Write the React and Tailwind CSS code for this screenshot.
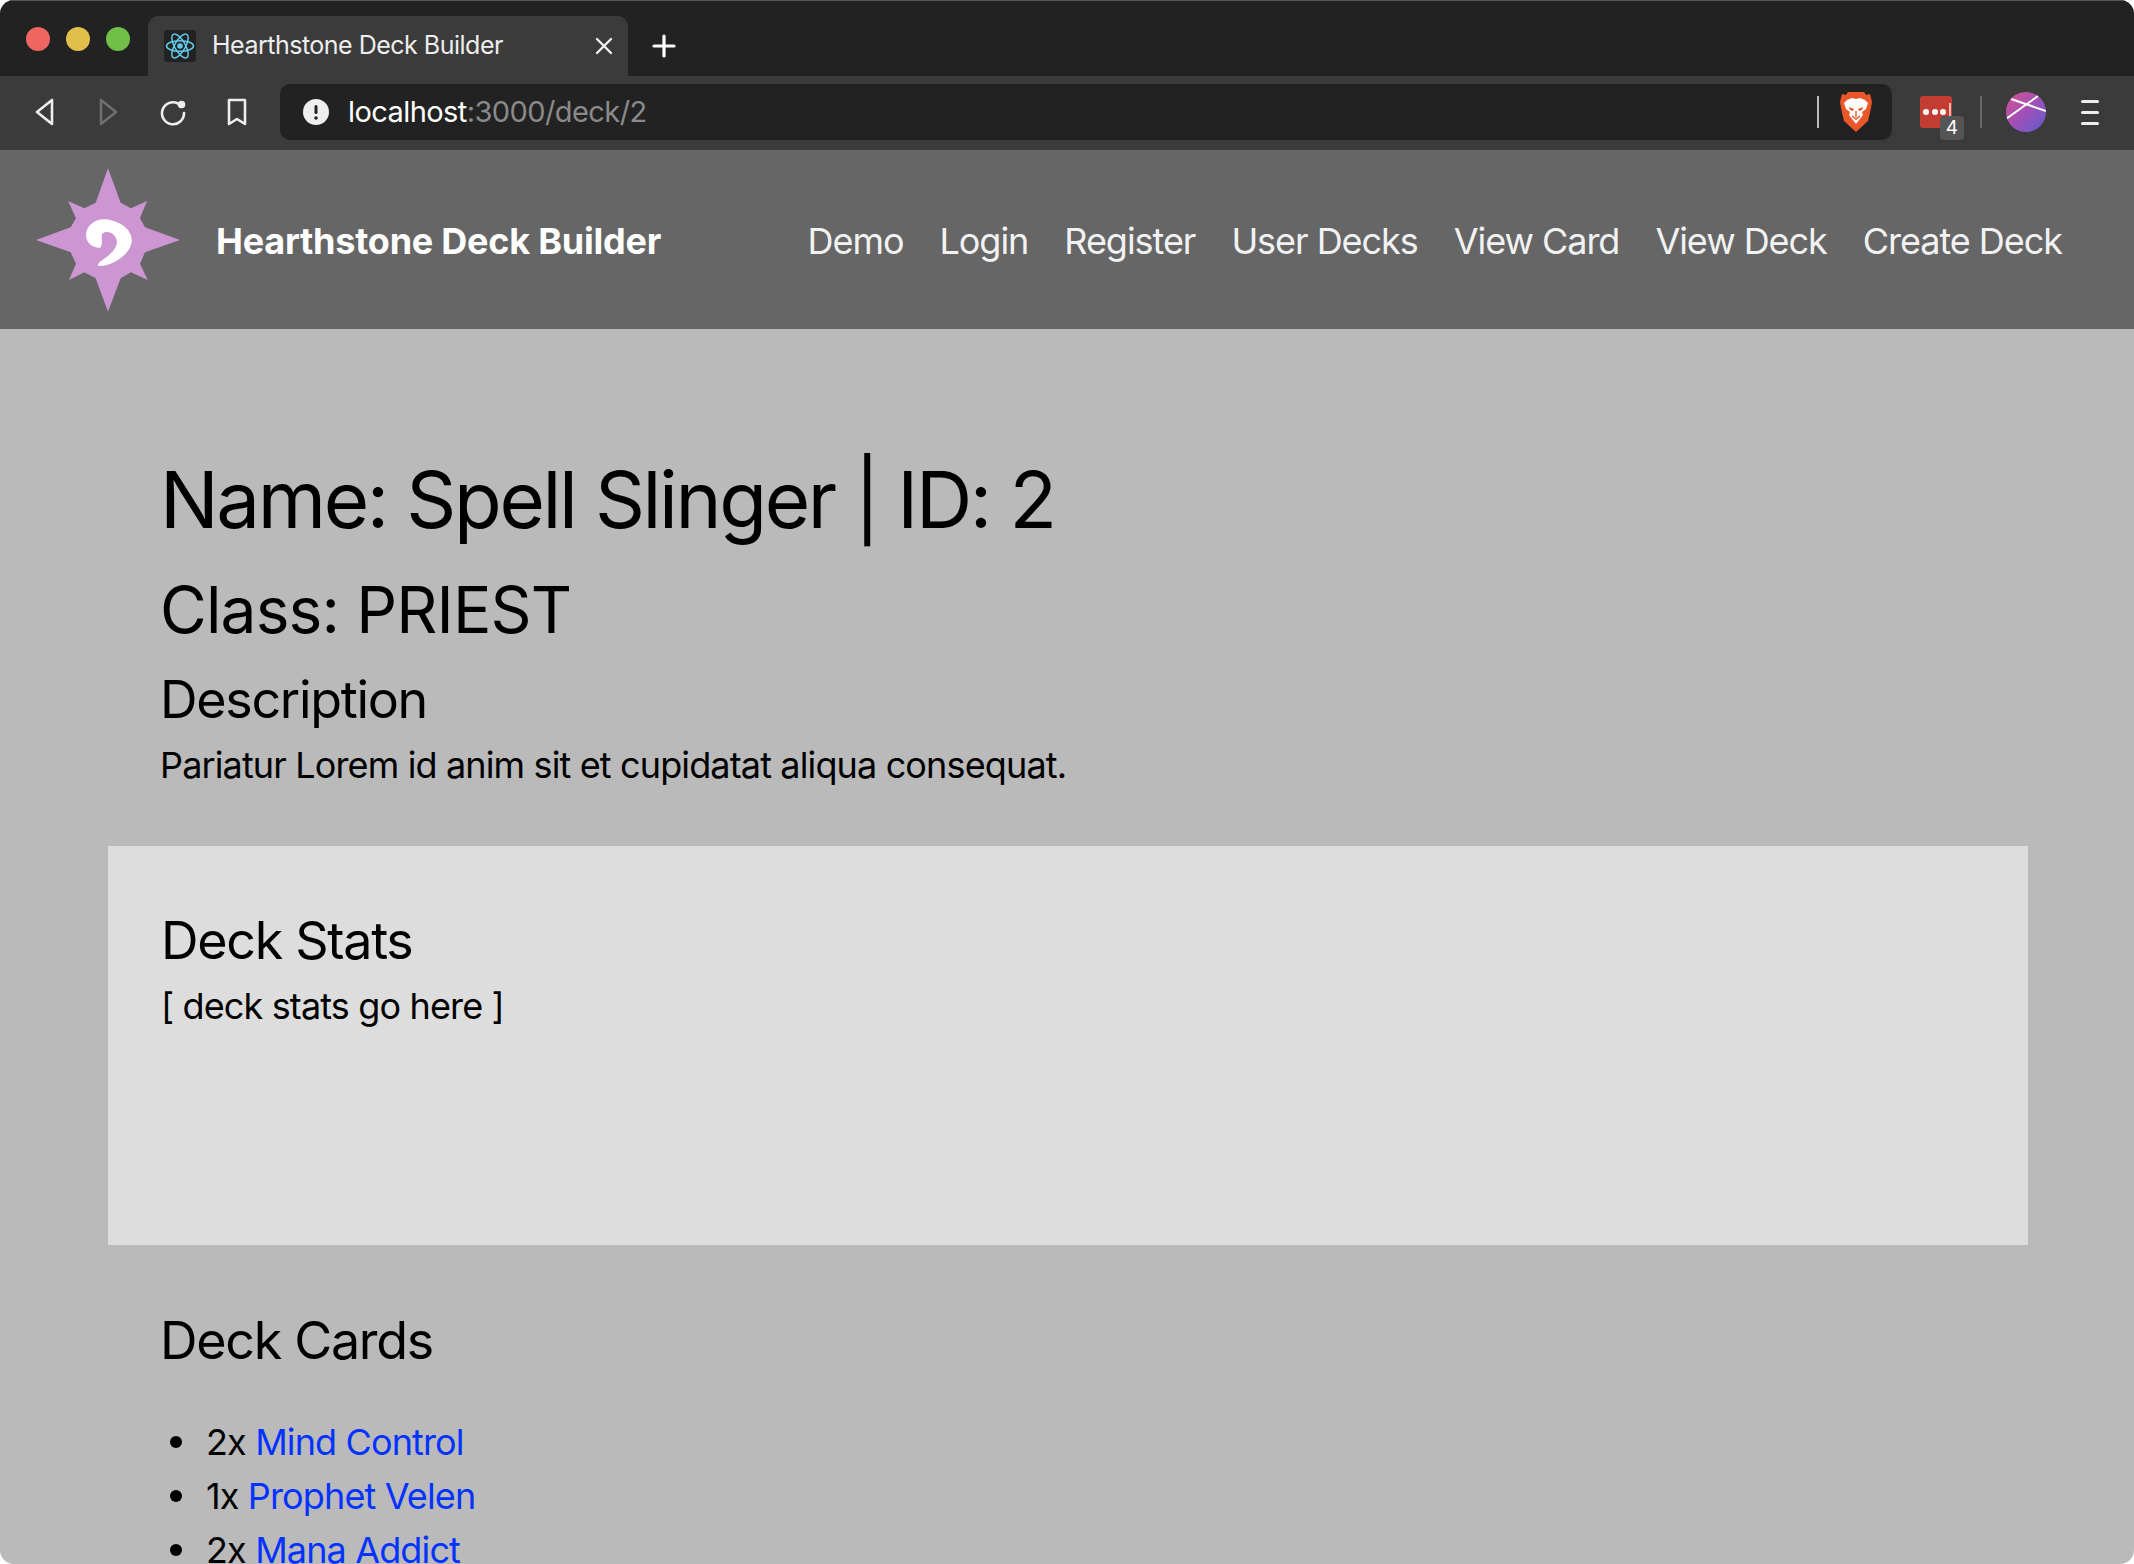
const FONT = "font-['Inter','Liberation_Sans',sans-serif]";

function Favicon() {
  return (
    <div className="w-8 h-8 rounded-[3px] bg-[#222222] flex items-center justify-center">
      <svg width="30" height="30" viewBox="-15 -15 30 30" fill="none" stroke="#61c8e8" strokeWidth="1.5">
        <circle r="2.8" fill="#61c8e8" stroke="none" />
        <ellipse rx="13.5" ry="5.3" />
        <ellipse rx="13.5" ry="5.3" transform="rotate(60)" />
        <ellipse rx="13.5" ry="5.3" transform="rotate(120)" />
      </svg>
    </div>
  );
}

function Lion() {
  return (
    <svg width="32" height="40" viewBox="0 0 32 40">
      <path d="M8 0h16l2 3 4-1 2 8-1 6-3 13-12 11L4 29 1 16 0 10l2-8 4 1z" fill="#e9562a" />
      <path d="M7 8l5-2 4 1 4-1 5 2 3 3-2 6-4 3 1 3-7 9-7-9 1-3-4-3-2-6z" fill="#ffffff" />
      <path d="M9 15l5 2-1 2-3-1zM23 15l-5 2 1 2 3-1z" fill="#e9562a" />
      <path d="M16 19v6M12 24l4 3 4-3" fill="none" stroke="#e9562a" strokeWidth="1.4" />
    </svg>
  );
}

function Logo() {
  return (
    <svg width="144" height="144" viewBox="48 55 432 430" className="shrink-0">
      <polygon fill="#cc96d2" points="264,55 302,158 333,175 381,153 360,205 375,232 480,270 375,307 360,341 383,390 333,367 302,385 264,485 227,385 193,367 147,390 168,341 152,307 48,270 152,232 168,205 144,153 193,175 227,158" />
      <path fill="#ffffff" d="M198 255C200 225 225 207 255 208C300 212 338 240 335 275C332 310 280 348 240 348C232 348 232 342 240 335C270 315 295 295 290 270C286 250 262 240 248 250C240 258 252 285 240 293C220 295 198 280 198 255Z" />
    </svg>
  );
}

const navLinks = ["Demo", "Login", "Register", "User Decks", "View Card", "View Deck", "Create Deck"];
const cards = [["2x", "Mind Control"], ["1x", "Prophet Velen"], ["2x", "Mana Addict"]];

export default function App() {
  return (
    <div className={`w-[2134px] h-[1564px] overflow-hidden bg-white ${FONT}`}>
      <div className="h-full overflow-hidden rounded-[14px] flex flex-col bg-[#bababa]">
        {/* tab strip */}
        <div className="h-[76px] shrink-0 bg-[#222222] border-t border-[#555555] flex items-end">
          <div className="w-[148px] h-[60px] flex items-center gap-4 pl-[26px] pb-[14px]">
            <span className="w-6 h-6 rounded-full bg-[#ef6560]" />
            <span className="w-6 h-6 rounded-full bg-[#e2bf4b]" />
            <span className="w-6 h-6 rounded-full bg-[#70bf47]" />
          </div>
          <div className="w-[480px] h-[60px] bg-[#3b3b3b] rounded-t-[10px] flex items-center pl-4 pr-[15px] gap-4">
            <Favicon />
            <span className="text-[25px] tracking-[-0.5px] text-[#eeeeee] flex-1">Hearthstone Deck Builder</span>
            <svg width="18" height="18" viewBox="0 0 18 18" stroke="#eeeeee" strokeWidth="2.4" strokeLinecap="round"><path d="M2 2l14 14M16 2L2 16" /></svg>
          </div>
          <div className="w-[72px] h-[60px] flex items-center justify-center">
            <svg width="24" height="24" viewBox="0 0 24 24" stroke="#ffffff" strokeWidth="3.2" strokeLinecap="round"><path d="M12 2v20M2 12h20" /></svg>
          </div>
        </div>
        {/* toolbar */}
        <div className="h-[74px] shrink-0 bg-[#3b3b3b] flex items-center pb-[2px]">
          <div className="w-[280px] flex items-center pl-[34px] gap-[41px] shrink-0">
            <svg width="22" height="28" viewBox="0 0 22 28" fill="none" stroke="#eeeeee" strokeWidth="2.6" strokeLinejoin="round"><path d="M18 2v24L3 14z" /></svg>
            <svg width="22" height="28" viewBox="0 0 22 28" fill="none" stroke="#6f6f6f" strokeWidth="2.6" strokeLinejoin="round"><path d="M4 2v24l15-12z" /></svg>
            <svg width="26" height="28" viewBox="0 0 26 28" fill="none" stroke="#eeeeee" strokeWidth="2.6" strokeLinecap="round"><path d="M18 5.5A11 11 0 1 0 24 15" /><circle cx="21.5" cy="6.5" r="3.8" fill="#eeeeee" stroke="none" /></svg>
            <svg width="20" height="28" viewBox="0 0 20 28" fill="none" stroke="#eeeeee" strokeWidth="2.6" strokeLinejoin="round"><path d="M2 2h16v24l-8-5-8 5z" /></svg>
          </div>
          <div className="w-[1612px] h-[56px] bg-[#222222] rounded-[10px] flex items-center pl-[23px] shrink-0">
            <svg width="26" height="26" viewBox="0 0 26 26" className="shrink-0">
              <circle cx="13" cy="13" r="13" fill="#eeeeee" />
              <rect x="11.5" y="6" width="3" height="9" rx="1.5" fill="#222222" />
              <circle cx="13" cy="19" r="1.8" fill="#222222" />
            </svg>
            <span className="ml-[19px] text-[29px] tracking-[-0.58px] text-white">localhost<span className="text-[#8a8a8a]">:3000/deck/2</span></span>
            <div className="ml-auto w-[2px] h-8 bg-[#bbbbbb]" />
            <div className="ml-[21px] mr-[20px]"><Lion /></div>
          </div>
          <div className="ml-[28px] relative w-8 h-8 rounded-[3px] bg-[#c43d33] flex items-center gap-[2.5px] pl-[3px]">
            <span className="w-[6px] h-[6px] rounded-full bg-white" />
            <span className="w-[6px] h-[6px] rounded-full bg-white" />
            <span className="w-[6px] h-[6px] rounded-full bg-white" />
            <span className="w-[2px] h-[16px] -mt-[2px] bg-[#f0b8b0]" />
            <div className="absolute left-5 top-5 w-6 h-6 rounded-[4px] bg-[#555555] text-white text-[19px] flex items-center justify-center">4</div>
          </div>
          <div className="ml-[28px] w-[2px] h-8 bg-[#666666]" />
          <div className="ml-[24px] w-10 h-10 rounded-full overflow-hidden bg-gradient-to-br from-[#d8508c] via-[#a04fb8] to-[#5a5ad0]">
            <svg width="40" height="40" viewBox="0 0 40 40" stroke="#ffffff" strokeWidth="2" fill="none"><path d="M5 7l35 12M0 27L32 4" /></svg>
          </div>
          <div className="ml-[35px] w-[18px] flex flex-col gap-[8px]">
            <span className="h-[3px] rounded bg-[#eeeeee]" />
            <span className="h-[3px] rounded bg-[#eeeeee]" />
            <span className="h-[3px] rounded bg-[#eeeeee]" />
          </div>
        </div>
        {/* navbar */}
        <nav className="h-[179px] shrink-0 bg-[#666666] flex items-center pl-9 pr-[72px] text-[36px]">
          <Logo />
          <a className="ml-9 mt-[2px] font-bold tracking-[-0.23px] text-white">Hearthstone Deck Builder</a>
          <div className="ml-auto mt-[2px] flex gap-9 tracking-[-1.04px] text-[#f2f2f2]">
            {navLinks.map((l) => <a key={l}>{l}</a>)}
          </div>
        </nav>
        {/* content */}
        <main className="flex-1 text-black text-[36px] leading-[54px] tracking-[-0.86px] pt-[123px]">
          <div className="px-[160px]">
            <h1 className="text-[78px] leading-[96px] tracking-[-2.4px]">Name: Spell Slinger | ID: 2</h1>
            <h2 className="text-[64px] leading-[77px] tracking-[-0.85px] mt-[23px]">Class: PRIEST</h2>
            <h3 className="text-[52px] leading-[67px] tracking-[-1.3px] mt-[18px]">Description</h3>
            <p className="mt-[5px]">Pariatur Lorem id anim sit et cupidatat aliqua consequat.</p>
          </div>
          <section className="ml-[108px] mr-[106px] mt-[54px] h-[399px] bg-[#dddddd] px-[53px] pt-[61px]">
            <h3 className="text-[52px] leading-[67px] tracking-[-1.3px]">Deck Stats</h3>
            <p className="mt-[5px]">[ deck stats go here ]</p>
          </section>
          <div className="px-[160px] pt-[62px]">
            <h3 className="text-[52px] leading-[67px] tracking-[-1.3px]">Deck Cards</h3>
            <ul className="mt-[41px] pl-[10px]">
              {cards.map(([n, c]) => (
                <li key={c} className="flex items-center gap-[24px]">
                  <span className="w-3 h-3 rounded-full bg-black shrink-0" />
                  <span>{n} <a className="text-[#0433ff]">{c}</a></span>
                </li>
              ))}
            </ul>
          </div>
        </main>
      </div>
    </div>
  );
}
